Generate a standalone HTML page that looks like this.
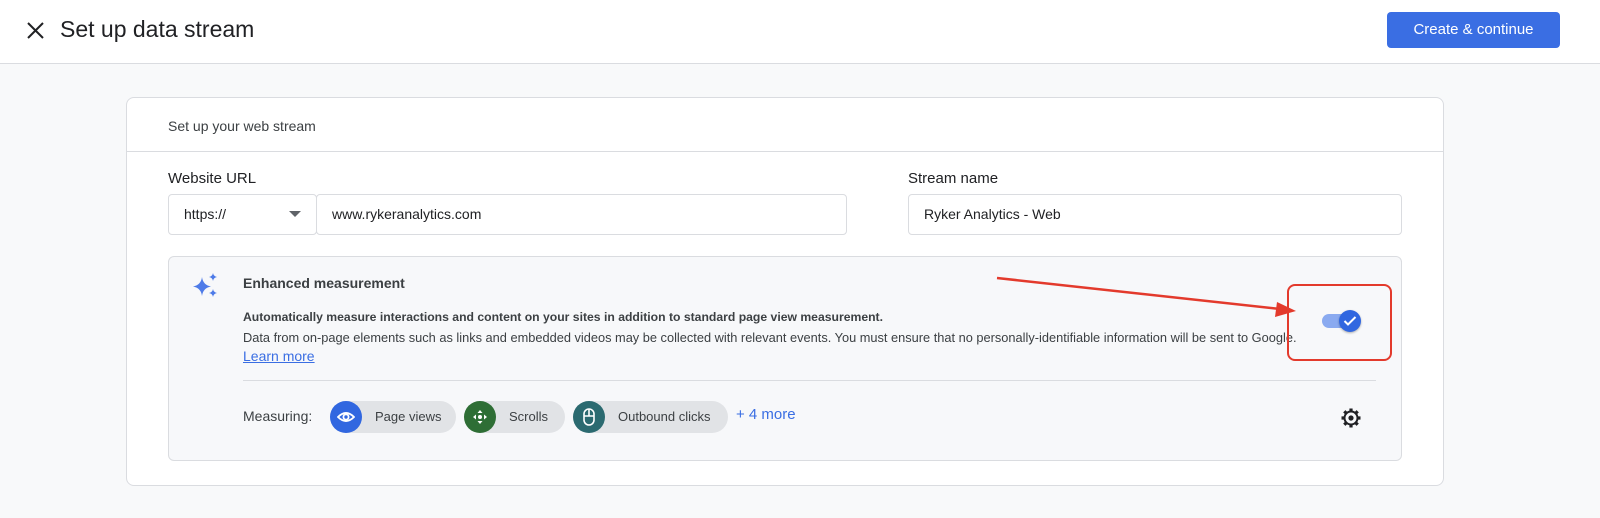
<!DOCTYPE html>
<html><head><style>
*{box-sizing:border-box;margin:0;padding:0}
body{width:1600px;height:518px;background:#f8f9fa;font-family:"Liberation Sans",Arial,sans-serif;color:#202124;position:relative;overflow:hidden}
.a{position:absolute}
.hdr{left:0;top:0;width:1600px;height:64px;background:#fff;border-bottom:1px solid #dadce0}
.btn{left:1387px;top:12px;width:173px;height:36px;background:#3a6ee3;border-radius:4px;color:#fff;font-size:15px;text-align:center;line-height:36px}
.card{left:126px;top:97px;width:1318px;height:389px;background:#fff;border:1px solid #dadce0;border-radius:8px}
.inp{height:41px;border:1px solid #dadce0;border-radius:4px;background:#fff;font-size:14px;line-height:39px;padding-left:15px}
.em{left:168px;top:256px;width:1234px;height:205px;background:#f7f8fa;border:1px solid #dadce0;border-radius:6px}
.chip{height:32px;border-radius:16px;background:#e1e3e6;font-size:13px;color:#3c4043;line-height:32px}
.ci{position:absolute;left:0;top:0;width:32px;height:32px;border-radius:16px}
</style></head><body>
<div class="a hdr"></div>
<svg class="a" style="left:27px;top:22px" width="17" height="17" viewBox="0 0 17 17"><path d="M1 1L16 16M16 1L1 16" stroke="#202124" stroke-width="2"/></svg>
<div class="a" style="left:60px;top:16px;font-size:23px">Set up data stream</div>
<div class="a btn">Create &amp; continue</div>
<div class="a card"></div>
<div class="a" style="left:168px;top:118px;font-size:14px;color:#3c4043">Set up your web stream</div>
<div class="a" style="left:127px;top:151px;width:1316px;height:1px;background:#dadce0"></div>
<div class="a" style="left:168px;top:170px;font-size:15px">Website URL</div>
<div class="a inp" style="left:168px;top:194px;width:149px">https://</div>
<svg class="a" style="left:289px;top:211px" width="12" height="7"><path d="M0 0H12L6 6Z" fill="#5f6368"/></svg>
<div class="a inp" style="left:316px;top:194px;width:531px">www.rykeranalytics.com</div>
<div class="a" style="left:908px;top:170px;font-size:15px">Stream name</div>
<div class="a inp" style="left:908px;top:194px;width:494px">Ryker Analytics - Web</div>
<div class="a em"></div>
<svg class="a" style="left:192px;top:272px" width="28" height="28" viewBox="0 0 28 28" fill="#4e7be8"><path d="M10 5Q11 13 19 14.5Q11 16 10 24Q9 16 1 14.5Q9 13 10 5Z"/><path d="M21 1Q21.6 4.4 25 5Q21.6 5.6 21 9Q20.4 5.6 17 5Q20.4 4.4 21 1Z"/><path d="M21 17Q21.6 20.4 25 21Q21.6 21.6 21 25Q20.4 21.6 17 21Q20.4 20.4 21 17Z"/></svg>
<div class="a" style="left:243px;top:275px;font-size:14px;font-weight:bold;color:#3c4043">Enhanced measurement</div>
<div class="a" style="left:243px;top:310px;font-size:12.2px;font-weight:bold;color:#3c4043">Automatically measure interactions and content on your sites in addition to standard page view measurement.</div>
<div class="a" style="left:243px;top:330px;font-size:12.8px;color:#3c4043">Data from on-page elements such as links and embedded videos may be collected with relevant events. You must ensure that no personally-identifiable information will be sent to Google.</div>
<div class="a" style="left:243px;top:348px;font-size:14px;color:#3a6ee3;text-decoration:underline">Learn more</div>
<div class="a" style="left:243px;top:380px;width:1133px;height:1px;background:#dadce0"></div>
<div class="a" style="left:243px;top:408px;font-size:14px;color:#3c4043">Measuring:</div>
<div class="a chip" style="left:330px;top:401px;width:126px;padding-left:45px"><div class="ci" style="background:#3167e0"></div>Page views</div>
<svg class="a" style="left:337px;top:409px" width="18" height="16" viewBox="0 0 18 16"><path d="M1 8Q9 0 17 8Q9 16 1 8Z" fill="none" stroke="#fff" stroke-width="1.8"/><circle cx="9" cy="8" r="2.6" fill="none" stroke="#fff" stroke-width="1.8"/></svg>
<div class="a chip" style="left:464px;top:401px;width:101px;padding-left:45px"><div class="ci" style="background:#2e6e35"></div>Scrolls</div>
<svg class="a" style="left:472px;top:409px" width="16" height="16" viewBox="0 0 16 16" fill="#fff"><path d="M8 1L10.5 4H5.5ZM8 15L10.5 12H5.5ZM1 8L4 5.5V10.5ZM15 8L12 5.5V10.5Z"/><circle cx="8" cy="8" r="2"/></svg>
<div class="a chip" style="left:573px;top:401px;width:155px;padding-left:45px"><div class="ci" style="background:#2b6a70"></div>Outbound clicks</div>
<svg class="a" style="left:583px;top:408px" width="12" height="18" viewBox="0 0 12 18"><rect x="1" y="1" width="10" height="16" rx="5" fill="none" stroke="#fff" stroke-width="1.6"/><path d="M1 8H11M6 1V8" stroke="#fff" stroke-width="1.6"/></svg>
<div class="a" style="left:736px;top:406px;font-size:15px;color:#3a6ee3">+ 4 more</div>
<svg class="a" style="left:1340px;top:407px" width="22" height="22" viewBox="0 0 22 22"><g stroke="#202124" stroke-width="3.2" stroke-linecap="butt"><path d="M11 1.5V5M11 17V20.5M1.5 11H5M17 11H20.5M4.3 4.3L6.8 6.8M15.2 15.2L17.7 17.7M17.7 4.3L15.2 6.8M6.8 15.2L4.3 17.7"/></g><circle cx="11" cy="11" r="6.5" fill="#f7f8fa" stroke="#202124" stroke-width="2"/><circle cx="11" cy="11" r="2.6" fill="#202124"/></svg>
<div class="a" style="left:1322px;top:314px;width:34px;height:14px;border-radius:7px;background:#8aaaf0"></div>
<div class="a" style="left:1339px;top:310px;width:22px;height:22px;border-radius:11px;background:#3167e0;box-shadow:0 1px 2px rgba(0,0,0,.3)"></div>
<svg class="a" style="left:1343px;top:315px" width="14" height="12"><path d="M1.5 6L5 9.5L12.5 2" stroke="#fff" stroke-width="2" fill="none"/></svg>
<div class="a" style="left:1287px;top:284px;width:105px;height:77px;border:2px solid #e33a2c;border-radius:8px"></div>
<svg class="a" style="left:990px;top:270px" width="320" height="50"><path d="M7 8L290 39" stroke="#e33a2c" stroke-width="2.5"/><path d="M306 41L285 47L287 32Z" fill="#e33a2c"/></svg>
</body></html>
